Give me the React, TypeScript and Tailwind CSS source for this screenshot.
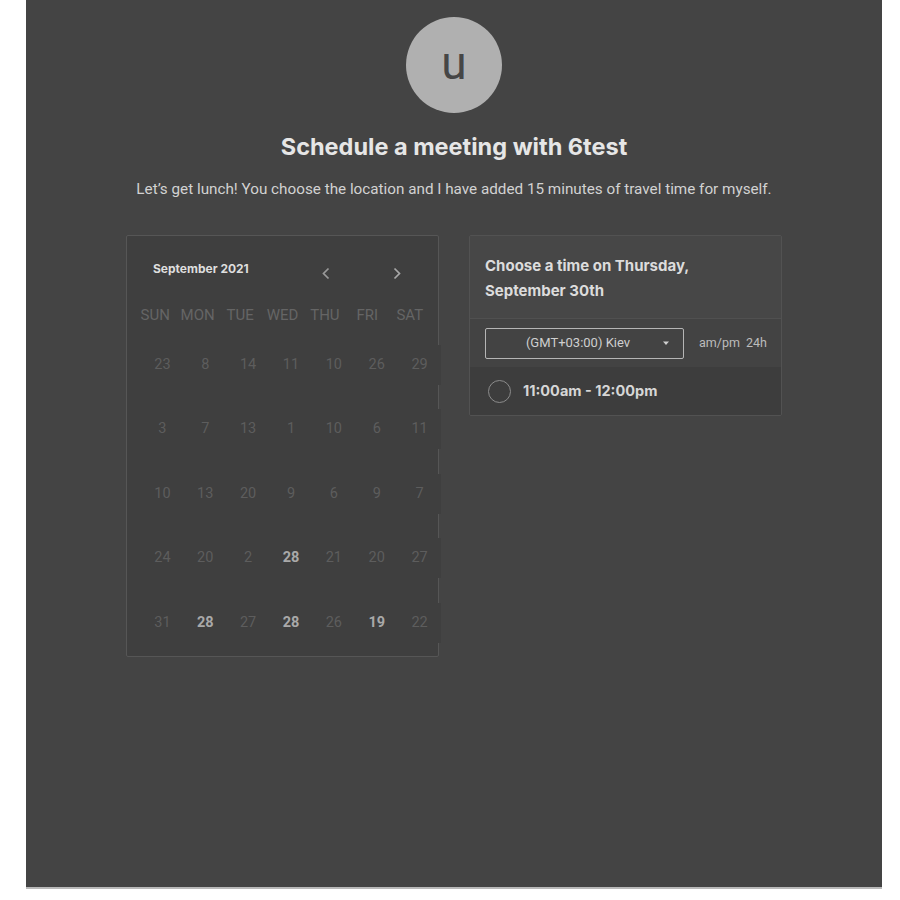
import React from 'react';

const weekdays = ['SUN', 'MON', 'TUE', 'WED', 'THU', 'FRI', 'SAT'];

// [day, available]
const weeks: [number, boolean][][] = [
    [[23, false], [8, false], [14, false], [11, false], [10, false], [26, false], [29, false]],
    [[3, false], [7, false], [13, false], [1, false], [10, false], [6, false], [11, false]],
    [[10, false], [13, false], [20, false], [9, false], [6, false], [9, false], [7, false]],
    [[24, false], [20, false], [2, false], [28, true], [21, false], [20, false], [27, false]],
    [[31, false], [28, true], [27, false], [28, true], [26, false], [19, true], [22, false]]
];

function Calendar() {
    return (
        <div className="w-[313px] h-[422px] border border-[#565656] rounded-[2px] bg-[#3f3f3f] pt-[25px]">
            <div className="flex items-center h-4 pl-[26px]">
                <span className="font-['Inter'] font-bold text-[12px] text-[#dedede] w-[150px]">September 2021</span>
                <button className="mt-2 ml-[18px] text-[#9a9a9a]">
                    <svg width="10" height="13" viewBox="0 0 10 13" fill="none" stroke="currentColor" strokeWidth="1.7">
                        <polyline points="7.5,1.5 2.5,6.5 7.5,11.5" />
                    </svg>
                </button>
                <button className="mt-2 ml-[61px] text-[#a8a8a8]">
                    <svg width="10" height="13" viewBox="0 0 10 13" fill="none" stroke="currentColor" strokeWidth="1.7">
                        <polyline points="2.5,1.5 7.5,6.5 2.5,11.5" />
                    </svg>
                </button>
            </div>
            <div className="grid grid-cols-7 w-[297px] ml-[7px] mt-[28px] font-['Roboto'] text-[15px] leading-5 text-[#656565]">
                {weekdays.map((d) => (
                    <div key={d} className="text-center">{d}</div>
                ))}
            </div>
            <div className="flex flex-col gap-[24.5px] ml-[14px] mt-[19.5px] w-[300px] font-['Roboto'] text-[14.5px]">
                {weeks.map((week, i) => (
                    <div key={i} className="grid grid-cols-7">
                        {week.map(([day, on], j) => (
                            <div
                                key={j}
                                className={
                                    'h-10 flex items-center justify-center bg-[#3f3f3f] ' +
                                    (on ? 'font-bold text-[#a9a9a9]' : 'text-[#5d5d5d]')
                                }
                            >
                                {day}
                            </div>
                        ))}
                    </div>
                ))}
            </div>
        </div>
    );
}

function TimePicker() {
    return (
        <div className="w-[313px] border border-[#525252] rounded-[2px] overflow-hidden self-start">
            <div className="bg-[#474747] px-[15px] pt-[17px] pb-[15px] border-b border-[#505050] font-['Inter'] font-bold text-[15px] leading-[25px] text-[#dcdcdc]">
                Choose a time on Thursday,
                <br />
                September 30th
            </div>
            <div className="bg-[#434343] h-12 flex items-center pl-[15px]">
                <div className="w-[199px] h-[31px] border border-[#b5b5b5] rounded-[2px] flex items-center">
                    <span className="flex-1 text-center pl-2 font-['Roboto'] text-[13px] text-[#cfcfcf]">(GMT+03:00) Kiev</span>
                    <svg width="8" height="5" viewBox="0 0 8 5" className="mr-[13px] fill-[#d0d0d0]">
                        <polygon points="1,0.5 7,0.5 4,4" />
                    </svg>
                </div>
                <span className="ml-[15px] font-['Roboto'] text-[12.5px] text-[#bcbcbc]">am/pm</span>
                <span className="ml-[6px] font-['Roboto'] text-[12.5px] text-[#bcbcbc]">24h</span>
            </div>
            <div className="bg-[#3d3d3d] h-12 flex items-center pl-[18px]">
                <div className="w-[23px] h-[23px] rounded-full border-[1.5px] border-[#8c8c8c]"></div>
                <span className="ml-[12px] font-['Inter'] font-bold text-[14.5px] text-[#d6d6d6]">11:00am - 12:00pm</span>
            </div>
        </div>
    );
}

export default function App() {
    return (
        <div className="min-h-screen bg-white">
            <div className="ml-[26px] w-[856px] h-[889px] bg-[#444444] border-b-2 border-[#b9b9b9] flex flex-col items-center pt-[17px]">
                <div className="w-24 h-24 rounded-full bg-[#b0b0b0] flex items-center justify-center">
                    <span className="font-['Roboto'] text-[46px] leading-none text-[#464646] -mt-1">u</span>
                </div>
                <h1 className="mt-[18px] font-['Inter'] font-bold text-[23.5px] leading-8 text-[#e6e6e6]">
                    Schedule a meeting with 6test
                </h1>
                <p className="mt-[16px] font-['Roboto'] text-[15.25px] leading-5 text-[#d2d2d2]">
                    Let’s get lunch! You choose the location and I have added 15 minutes of travel time for myself.
                </p>
                <div className="mt-[36px] flex gap-[30px]">
                    <Calendar />
                    <TimePicker />
                </div>
            </div>
        </div>
    );
}
